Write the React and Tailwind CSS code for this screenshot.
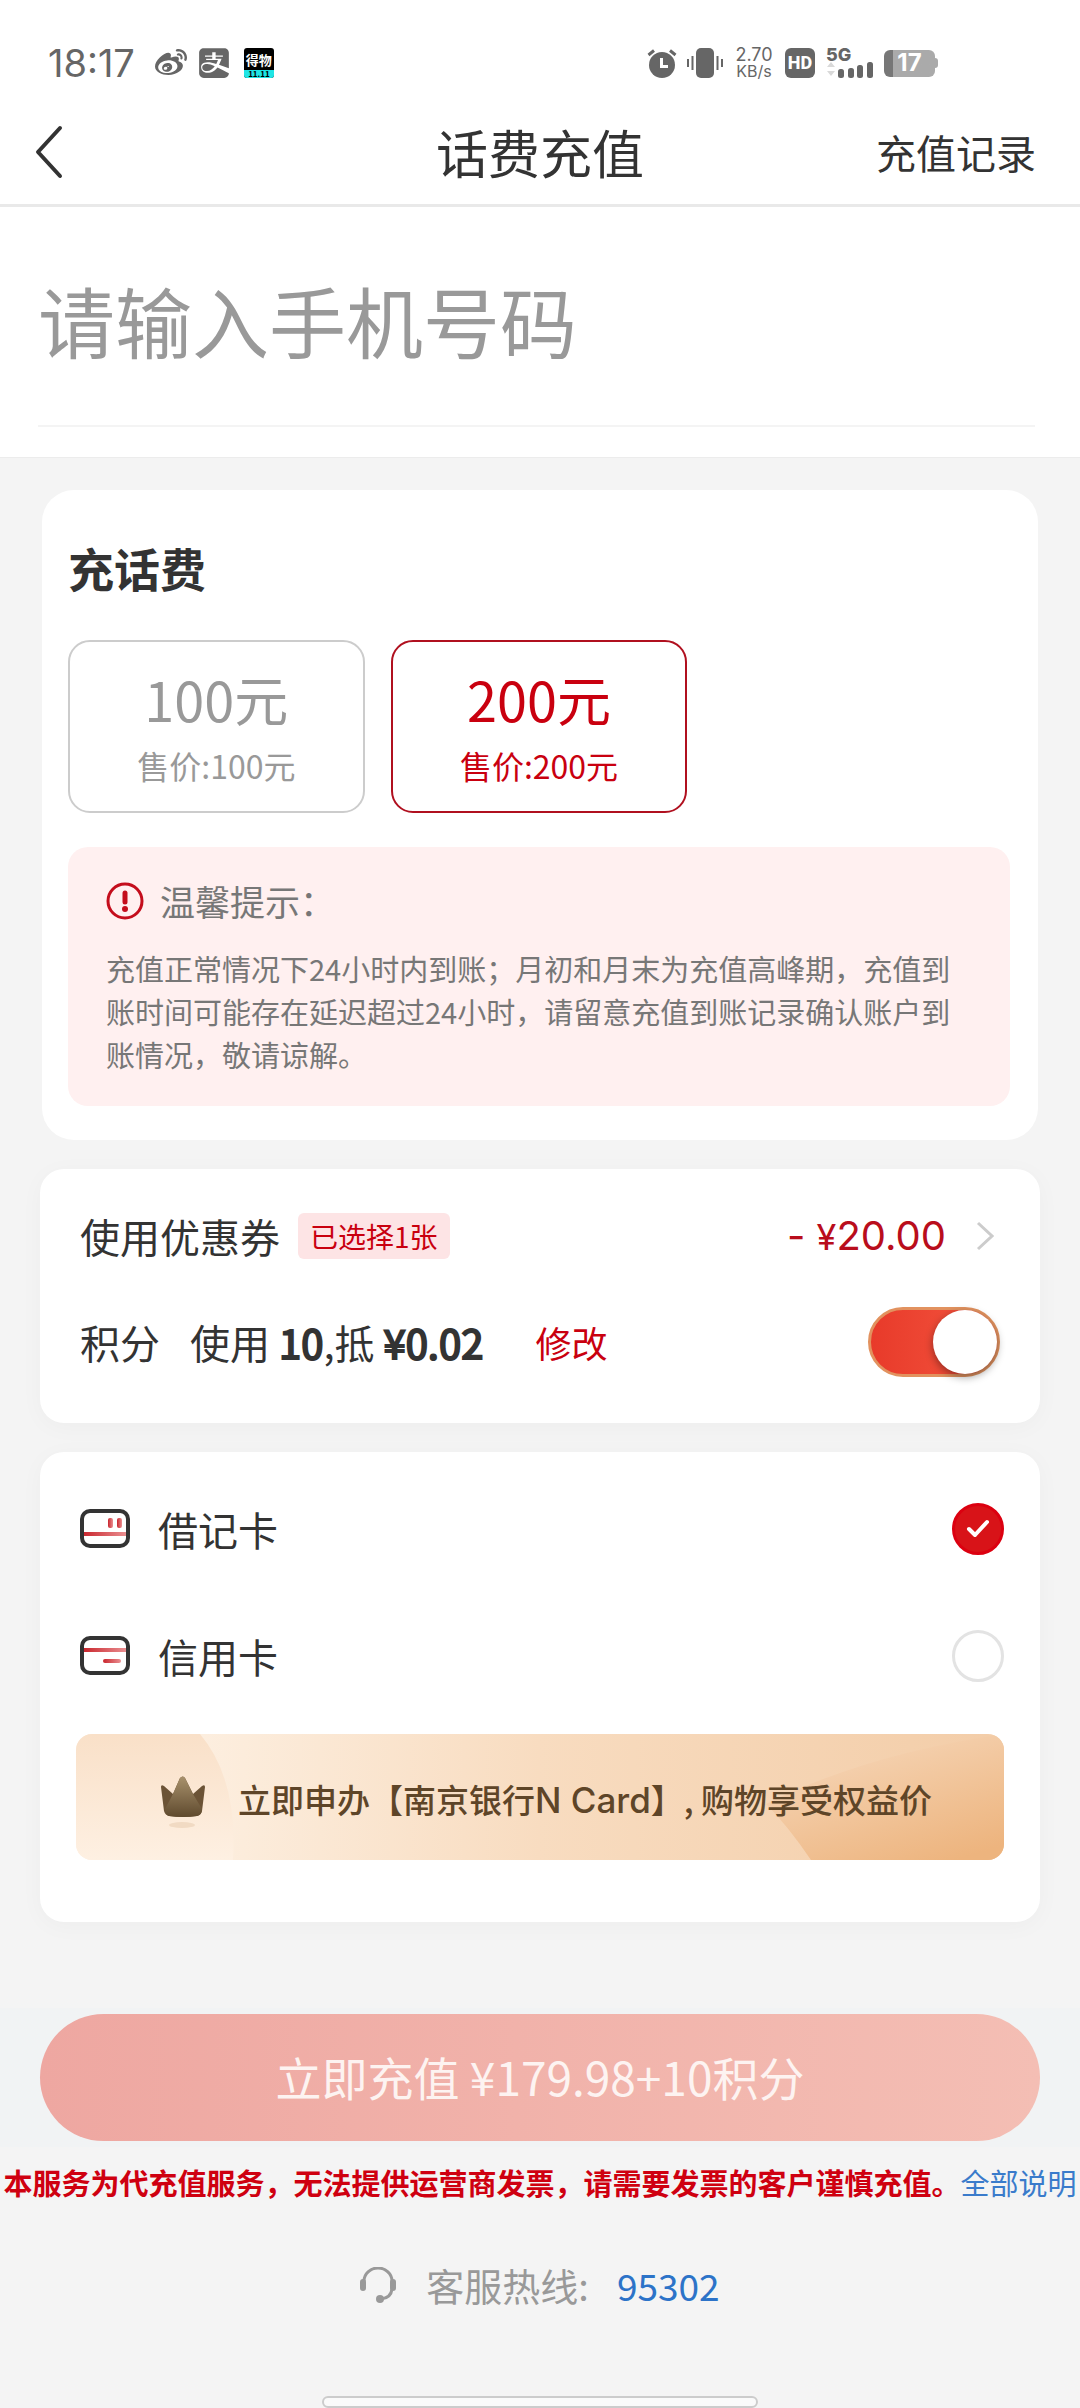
import React, { useState } from "react";
import { FaAlipay, FaWeibo } from "react-icons/fa";

function AlarmIcon() {
  return (
    <svg viewBox="0 0 30 30" className="h-[30px] w-[30px]" aria-hidden="true">
      <circle cx="15" cy="17" r="13" fill="#666" />
      <path d="M1.5 7 L7 2.5 M28.5 7 L23 2.5" stroke="#666" strokeWidth="3" fill="none" />
      <path d="M14.5 10 V18.5 H21" stroke="#fff" strokeWidth="3" fill="none" />
    </svg>
  );
}

function VibrateIcon() {
  return (
    <svg viewBox="0 0 36 30" className="h-[30px] w-9" aria-hidden="true">
      <rect x="9" y="0" width="18" height="30" rx="5" fill="#666" />
      <path d="M1 11 V19 M5.5 8 V22 M30.5 8 V22 M35 11 V19" stroke="#666" strokeWidth="2" fill="none" />
    </svg>
  );
}

function SignalIcon() {
  return (
    <svg viewBox="0 0 48 18" className="h-[18px] w-12" aria-hidden="true">
      <path d="M1 7 L5 2 L9 7 Z M1 11 L5 16 L9 11 Z" fill="#d9d9d9" />
      <g fill="#666">
        <rect x="12" y="9" width="6" height="9" rx="2.5" />
        <rect x="22" y="8" width="6" height="10" rx="2.5" />
        <rect x="31" y="5" width="6" height="13" rx="2.5" />
        <rect x="41" y="2" width="6" height="16" rx="2.5" />
      </g>
    </svg>
  );
}

function StatusBar() {
  return (
    <div className="flex h-[100px] items-start justify-between pt-12 pr-[142px] pl-12 text-[#666]">
      <div className="flex h-[30px] items-center">
        <span className="mr-5 font-['Inter',sans-serif] text-[38px] leading-[30px]">18:17</span>
        <FaWeibo className="mr-3 size-8" aria-hidden="true" />
        <FaAlipay className="mr-[15px] h-[34px] w-[30px]" aria-hidden="true" />
        <span className="flex size-[30px] flex-col overflow-hidden rounded-[3px] bg-black">
          <span className="h-[22px] text-center text-[13px] leading-[24px] font-bold text-white">得物</span>
          <span className="h-2 bg-[#1fe5e5] text-center text-[8px] leading-2 font-bold text-black">11.11</span>
        </span>
      </div>
      <div className="flex h-[30px] items-center font-['Inter',sans-serif]">
        <AlarmIcon />
        <span className="w-2.5" />
        <VibrateIcon />
        <span className="mr-3 ml-3 flex w-[38px] flex-col text-center">
          <span className="text-lg leading-4">2.70</span>
          <span className="text-base leading-4">KB/s</span>
        </span>
        <span className="flex size-[30px] items-center justify-center rounded-md bg-[#666] font-['Roboto',sans-serif] text-lg leading-none font-extrabold text-white">HD</span>
        <span className="ml-[11px] flex w-[50px] flex-col">
          <span className="h-3 text-lg leading-[14px] font-extrabold">5G</span>
          <SignalIcon />
        </span>
        <span className="ml-2 flex h-[27px] items-center">
          <span className="flex h-[27px] w-[51px] items-center justify-center rounded-md bg-linear-to-r from-[#777] from-18% to-[#aaa] to-18% text-2xl leading-none font-bold text-white">17</span>
          <span className="h-2.5 w-[3px] rounded-r bg-[#aaa]" />
        </span>
      </div>
    </div>
  );
}

function Header() {
  return (
    <header className="grid h-[107px] grid-cols-[1fr_auto_1fr] items-center border-b-[3px] border-[#e9e9e9] px-[34px] text-[#333]">
      <button type="button" aria-label="返回" className="w-8">
        <svg viewBox="0 0 30 54" className="h-[54px] w-[30px]" aria-hidden="true">
          <path d="M26 3 L4 27 L26 51" fill="none" stroke="#333" strokeWidth="4" strokeLinecap="round" strokeLinejoin="round" />
        </svg>
      </button>
      <h1 className="text-[52px] leading-[72px]">话费充值</h1>
      <a href="#records" className="mr-2.5 justify-self-end text-[40px] leading-[60px]">充值记录</a>
    </header>
  );
}

function AmountOption({ amount, selected, onSelect }) {
  return (
    <button
      type="button"
      aria-pressed={selected}
      onClick={onSelect}
      className={
        "flex h-[173px] flex-col items-center rounded-[22px] border-2 pt-[21px] " +
        (selected ? "border-[#b0101f] text-[#c9000f]" : "border-[#ccc] text-[#999]")
      }
    >
      <span className="text-[54px] leading-[72px]">{amount}元</span>
      <span className="mt-1.5 text-[32px] leading-[48px]">售价:{amount}元</span>
    </button>
  );
}

function DebitCardIcon() {
  return (
    <svg viewBox="0 0 50 39" className="h-[39px] w-[50px]" aria-hidden="true">
      <defs>
        <linearGradient id="debit" x1="0" x2="1">
          <stop offset="0" stopColor="#c9252d" />
          <stop offset="1" stopColor="#ea9092" />
        </linearGradient>
      </defs>
      <rect x="3" y="23" width="44" height="4" fill="url(#debit)" />
      <rect x="28" y="9" width="5" height="10" rx="2" fill="url(#debit)" />
      <rect x="37" y="9" width="5" height="10" rx="2" fill="url(#debit)" />
      <rect x="2" y="2" width="46" height="35" rx="8" fill="none" stroke="#333" strokeWidth="4" />
    </svg>
  );
}

function CreditCardIcon() {
  return (
    <svg viewBox="0 0 50 39" className="h-[39px] w-[50px]" aria-hidden="true">
      <defs>
        <linearGradient id="credit" x1="0" x2="1">
          <stop offset="0" stopColor="#c9252d" />
          <stop offset="1" stopColor="#ea9092" />
        </linearGradient>
      </defs>
      <rect x="3" y="12" width="44" height="4" fill="url(#credit)" />
      <rect x="23" y="23" width="18" height="4" rx="2" fill="url(#credit)" />
      <rect x="2" y="2" width="46" height="35" rx="8" fill="none" stroke="#333" strokeWidth="4" />
    </svg>
  );
}

function PayOption({ value, icon, label, checked, onChange }) {
  return (
    <label className="flex h-[127px] items-center pl-1">
      {icon}
      <span className="ml-7 flex-1 text-[40px] leading-[60px] text-[#333]">{label}</span>
      <input type="radio" name="pay" value={value} checked={checked} onChange={onChange} className="peer sr-only" />
      <span className="flex size-[52px] items-center justify-center rounded-full border-[3px] border-[#e3e3e3] peer-checked:border-[#dc0010] peer-checked:bg-[#d81318]">
        {checked && (
          <svg viewBox="0 0 24 20" className="h-5 w-6" aria-hidden="true">
            <path d="M3 10 L9 16 L21 3" fill="none" stroke="#fff" strokeWidth="4" strokeLinecap="round" strokeLinejoin="round" />
          </svg>
        )}
      </span>
    </label>
  );
}

function CardBanner() {
  return (
    <a
      href="#ncard"
      className="relative mt-[15px] flex h-[126px] items-center overflow-hidden rounded-2xl bg-linear-to-r from-[#fdf0e2] from-10% via-[#f8dcc0] via-50% to-[#f3cda8] pt-1 pl-[84px] text-[#5e4528]"
    >
      <svg viewBox="0 0 928 126" preserveAspectRatio="none" className="absolute inset-0 h-full w-full" aria-hidden="true">
        <defs>
          <linearGradient id="discLeft" x1="0" y1="0" x2="0" y2="1">
            <stop offset="0" stopColor="#f9e0c8" />
            <stop offset="1" stopColor="#fef0e2" />
          </linearGradient>
          <linearGradient id="discRight" x1="0.2" y1="0" x2="0.8" y2="1">
            <stop offset="0.25" stopColor="#f4cfac" />
            <stop offset="1" stopColor="#edb47e" />
          </linearGradient>
        </defs>
        <path d="M0 0 H124 Q162 45 157 126 H0 Z" fill="url(#discLeft)" />
        <path d="M735 126 Q712 92 690 70 Q790 20 928 0 V126 Z" fill="url(#discRight)" />
      </svg>
      <svg viewBox="0 -3 46 56" className="relative mt-1 h-14 w-[46px]" aria-hidden="true">
        <defs>
          <linearGradient id="crown" x1="0" y1="0" x2="0" y2="1">
            <stop offset="0" stopColor="#a8916c" />
            <stop offset="1" stopColor="#5f4a2e" />
          </linearGradient>
        </defs>
        <ellipse cx="22" cy="49" rx="13" ry="3" fill="#f1dac3" />
        <path d="M1 11 Q1 8 4 10 L13 18 L20 2 Q23 -1 25 2 L33 18 L42 10 Q45 8 45 11 L42 35 Q41 39 37 40 Q23 42 9 40 Q5 39 4 35 Z" fill="#6b5336" />
        <path d="M13 18 L20 2 Q23 -1 25 2 L33 18 L42 33 Q42 39 37 40 Q23 42 9 40 Q5 39 5 33 Z" fill="url(#crown)" />
      </svg>
      <span className="relative ml-8 text-[33px] leading-[50px] font-medium whitespace-nowrap">
        立即申办【南京银行<span className="font-['Inter','Noto_Sans_CJK_SC',sans-serif] text-[35px]">N Card</span>】, 购物享受权益价
      </span>
    </a>
  );
}

export default function App() {
  const [amount, setAmount] = useState(200);
  const [points, setPoints] = useState(true);
  const [pay, setPay] = useState("debit");
  const [phone, setPhone] = useState("");

  return (
    <div className="min-h-screen bg-[#f4f4f4] font-['Noto_Sans_CJK_SC','Noto_Sans',sans-serif]">
      <div className="bg-white">
        <StatusBar />
        <Header />
        <div className="border-b border-[#ececec] pr-[45px] pb-[30px] pl-[38px]">
          <input
            type="tel"
            aria-label="手机号码"
            placeholder="请输入手机号码"
            value={phone}
            onChange={(e) => setPhone(e.target.value)}
            className="block h-[220px] w-full border-b-2 border-[#f4f4f4] pt-1.5 text-[77px] text-[#333] outline-none placeholder:text-[#999]"
          />
        </div>
      </div>

      <main className="pt-8">
        <section className="mx-[42px] rounded-[32px] bg-white pt-11 pr-7 pb-[34px] pl-[26px]">
          <h2 className="text-[46px] leading-[66px] font-bold text-[#333]">充话费</h2>
          <div className="mt-10 grid grid-cols-3 gap-[26px]">
            <AmountOption amount={100} selected={amount === 100} onSelect={() => setAmount(100)} />
            <AmountOption amount={200} selected={amount === 200} onSelect={() => setAmount(200)} />
          </div>
          <div className="mt-[34px] rounded-[20px] bg-[#fff0f0] px-[38px] pt-8 pb-[30px] text-[#777]">
            <div className="flex h-11 items-center">
              <svg viewBox="0 0 38 38" className="size-[38px]" aria-hidden="true">
                <circle cx="19" cy="19" r="17" fill="none" stroke="#c40d1c" strokeWidth="3" />
                <path d="M19 11 V20" stroke="#c40d1c" strokeWidth="5" strokeLinecap="round" />
                <circle cx="19" cy="27" r="3" fill="#c40d1c" />
              </svg>
              <span className="ml-4 text-[35px] leading-[44px]">温馨提示：</span>
            </div>
            <p className="mt-6 text-[29px] leading-[43px]">
              充值正常情况下24小时内到账；月初和月末为充值高峰期，充值到账时间可能存在延迟超过24小时，请留意充值到账记录确认账户到账情况，敬请谅解。
            </p>
          </div>
        </section>

        <section className="mx-10 mt-[29px] rounded-3xl bg-white px-10 pt-[34px] pb-[46px] text-[40px] text-[#333] shadow-[0_4px_24px_rgba(0,0,0,0.03)]">
          <div className="flex h-[66px] items-center">
            <span className="leading-[60px]">使用优惠券</span>
            <span className="ml-[18px] rounded-md bg-[#fde4e5] px-3 text-[28px] leading-[46px] text-[#c9000f]">已选择1张</span>
            <span className="ml-auto font-['Inter',sans-serif] leading-[60px] text-[#b90d1c]">
              - <span className="text-4xl">¥</span>20.00
            </span>
            <svg viewBox="0 0 18 30" className="mr-1.5 ml-[30px] h-[30px] w-[18px]" aria-hidden="true">
              <path d="M2 2 L16 15 L2 28" fill="none" stroke="#ccc" strokeWidth="3" />
            </svg>
          </div>
          <div className="mt-[38px] flex h-[70px] items-center">
            <span className="leading-[60px]">积分</span>
            <span className="ml-[30px] leading-[60px]">
              使用 <b className="font-normal [-webkit-text-stroke:2px]">10</b>,抵{" "}
              <b className="font-normal [-webkit-text-stroke:2px]">¥0.02</b>
            </span>
            <button type="button" className="ml-[52px] text-4xl leading-[60px] text-[#c9000f]">修改</button>
            <label className="ml-auto">
              <input
                type="checkbox"
                role="switch"
                aria-label="使用积分"
                checked={points}
                onChange={() => setPoints(!points)}
                className="peer sr-only"
              />
              <span className="flex h-[70px] w-[132px] justify-start rounded-full border-[3px] border-[#ccc] bg-[#ddd] peer-checked:justify-end peer-checked:border-[#e2925f] peer-checked:bg-linear-to-r peer-checked:from-[#e83a2a] peer-checked:to-[#f4553f]">
                <span className="size-16 rounded-full bg-white shadow-[0_3px_8px_rgba(0,0,0,0.4)]" />
              </span>
            </label>
          </div>
        </section>

        <section className="mx-10 mt-[29px] rounded-3xl bg-white px-9 pt-[13px] pb-[62px] shadow-[0_4px_24px_rgba(0,0,0,0.03)]">
          <PayOption value="debit" icon={<DebitCardIcon />} label="借记卡" checked={pay === "debit"} onChange={() => setPay("debit")} />
          <PayOption value="credit" icon={<CreditCardIcon />} label="信用卡" checked={pay === "credit"} onChange={() => setPay("credit")} />
          <CardBanner />
        </section>

        <div className="mt-[86px] bg-[#f1f3f4] px-10 py-1.5">
          <button
            type="button"
            className="h-[127px] w-full rounded-full bg-linear-to-r from-[#eea7a1] to-[#f4beb4] pb-1 text-[46px] leading-[66px] text-[#fdf3f1]"
          >
            立即充值 ¥179.98+10积分
          </button>
        </div>

        <p className="mt-[13px] text-center text-[29px] leading-[44px] whitespace-nowrap">
          <b className="text-[#cf0010]">本服务为代充值服务，无法提供运营商发票，请需要发票的客户谨慎充值。</b>
          <a href="#terms" className="text-[#3a7bcb]">全部说明</a>
        </p>

        <div className="mt-[53px] flex h-14 items-center justify-center text-[38px] leading-[56px] text-[#999]">
          <svg viewBox="0 0 36 36" className="size-9" aria-hidden="true">
            <path d="M4 14 A14 13 0 0 1 32 14 V22 Q31 31 21 32" fill="none" stroke="#999" strokeWidth="3" />
            <rect x="0" y="12" width="6" height="12" rx="3" fill="#999" />
            <rect x="30" y="12" width="6" height="12" rx="3" fill="#999" />
            <circle cx="20" cy="32" r="4" fill="#999" />
          </svg>
          <span className="ml-[30px]">客服热线:</span>
          <a href="tel:95302" className="ml-7 text-[37px] text-[#2c73c8]">95302</a>
        </div>

        <div className="mx-auto mt-[83px] h-3 w-[40.4%] rounded-full border-2 border-[#ccc] bg-[#fafafa]" />
      </main>
    </div>
  );
}
